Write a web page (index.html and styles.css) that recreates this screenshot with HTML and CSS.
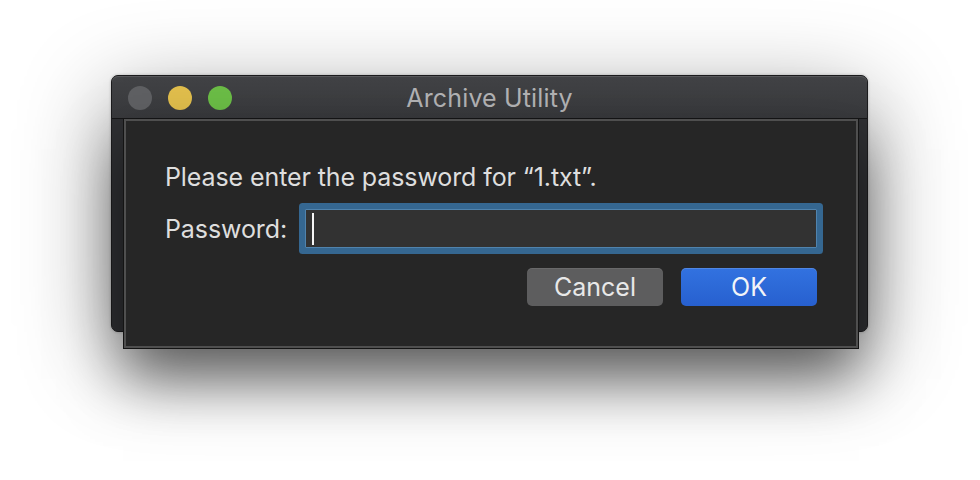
FILE: index.html
```html
<!DOCTYPE html>
<html lang="en">
<head>
<meta charset="utf-8">
<title>Archive Utility</title>
<link rel="stylesheet" href="styles.css">
</head>
<body>
<div class="desktop">
  <div class="window">
    <div class="titlebar">
      <div class="lights">
        <span class="light light-gray"></span>
        <span class="light light-yellow"></span>
        <span class="light light-green"></span>
      </div>
      <div class="title">Archive Utility</div>
    </div>
    <div class="window-body"></div>
    <div class="sheet">
      <p class="message">Please enter the password for “1.txt”.</p>
      <div class="field-row">
        <label class="label" for="pw">Password:</label>
        <div class="input"><span class="caret"></span></div>
      </div>
      <div class="buttons">
        <button class="btn btn-cancel">Cancel</button>
        <button class="btn btn-ok">OK</button>
      </div>
    </div>
  </div>
</div>
</body>
</html>
```
FILE: styles.css
```css
html, body {
  margin: 0;
  padding: 0;
  background: #ffffff;
}
body {
  width: 980px;
  height: 480px;
  overflow: hidden;
  font-family: Inter, "Noto Sans", "Liberation Sans", sans-serif;
}
.desktop {
  position: relative;
  width: 980px;
  height: 480px;
}
.window {
  position: absolute;
  left: 111px;
  top: 75px;
  width: 757px;
  height: 257px;
  box-sizing: border-box;
  border-radius: 7px;
  background: #2e2f32;
  border: 1px solid #1c1c1e;
  box-shadow: 0 24px 90px rgba(0, 0, 0, 0.42), 0 0 3px rgba(0, 0, 0, 0.25);
  display: flex;
  flex-direction: column;
}
.titlebar {
  position: relative;
  height: 43px;
  box-sizing: border-box;
  border-bottom: 1px solid #151516;
  border-radius: 6px 6px 0 0;
  background: linear-gradient(#424346, #38393c);
  box-shadow: inset 0 1px 0 rgba(255, 255, 255, 0.12);
  display: flex;
  align-items: center;
  justify-content: center;
}
.lights {
  position: absolute;
  left: 16px;
  top: 10px;
  display: flex;
  gap: 16px;
}
.light {
  width: 24px;
  height: 24px;
  border-radius: 50%;
  display: block;
}
.light-gray { background: #5f6063; }
.light-yellow { background: #e1be4c; }
.light-green { background: #6bbd46; }
.title {
  color: #b3b3b5;
  font-size: 25px;
  letter-spacing: 0.15px;
  line-height: 30px;
  margin-top: 1px;
}
.window-body {
  flex: 1;
  border-radius: 0 0 6px 6px;
}
.sheet {
  position: absolute;
  left: 11px;
  top: 43px;
  width: 736px;
  height: 230px;
  box-sizing: border-box;
  background: #262626;
  border: 1px solid #141414;
  border-top: none;
  box-shadow: inset 0 0 0 2px #4f4f4f, 0 30px 55px rgba(0, 0, 0, 0.5);
  padding: 43px 41px 0 41px;
  color: #dedede;
}
.message {
  margin: 0;
  font-size: 25px;
  line-height: 30px;
  letter-spacing: -0.1px;
}
.field-row {
  display: flex;
  align-items: center;
  gap: 18px;
  margin-top: 17px;
}
.label {
  font-size: 25px;
  line-height: 30px;
  letter-spacing: -0.1px;
}
.input {
  flex: 1;
  height: 39px;
  box-sizing: border-box;
  background: #323232;
  border: 1px solid #5083ad;
  border-radius: 1px;
  box-shadow: 0 0 0 6px #356791;
  position: relative;
  display: flex;
  align-items: center;
  padding-left: 6px;
}
.caret {
  display: block;
  width: 2px;
  height: 32px;
  background: #f5f5f5;
}
.buttons {
  display: flex;
  justify-content: flex-end;
  gap: 18px;
  margin-top: 20px;
}
.btn {
  width: 136px;
  height: 38px;
  border: none;
  border-radius: 5px;
  font-family: Inter, "Noto Sans", "Liberation Sans", sans-serif;
  font-size: 25px;
  padding: 0;
  line-height: 38px;
  color: #e8e8e8;
}
.btn-cancel {
  background: #5d5d5e;
  box-shadow: inset 0 1px 0 rgba(255, 255, 255, 0.08);
}
.btn-ok {
  background: linear-gradient(#3272e0, #2760cf);
  color: #f2f4f8;
  box-shadow: inset 0 1px 0 rgba(255, 255, 255, 0.15);
}
```
